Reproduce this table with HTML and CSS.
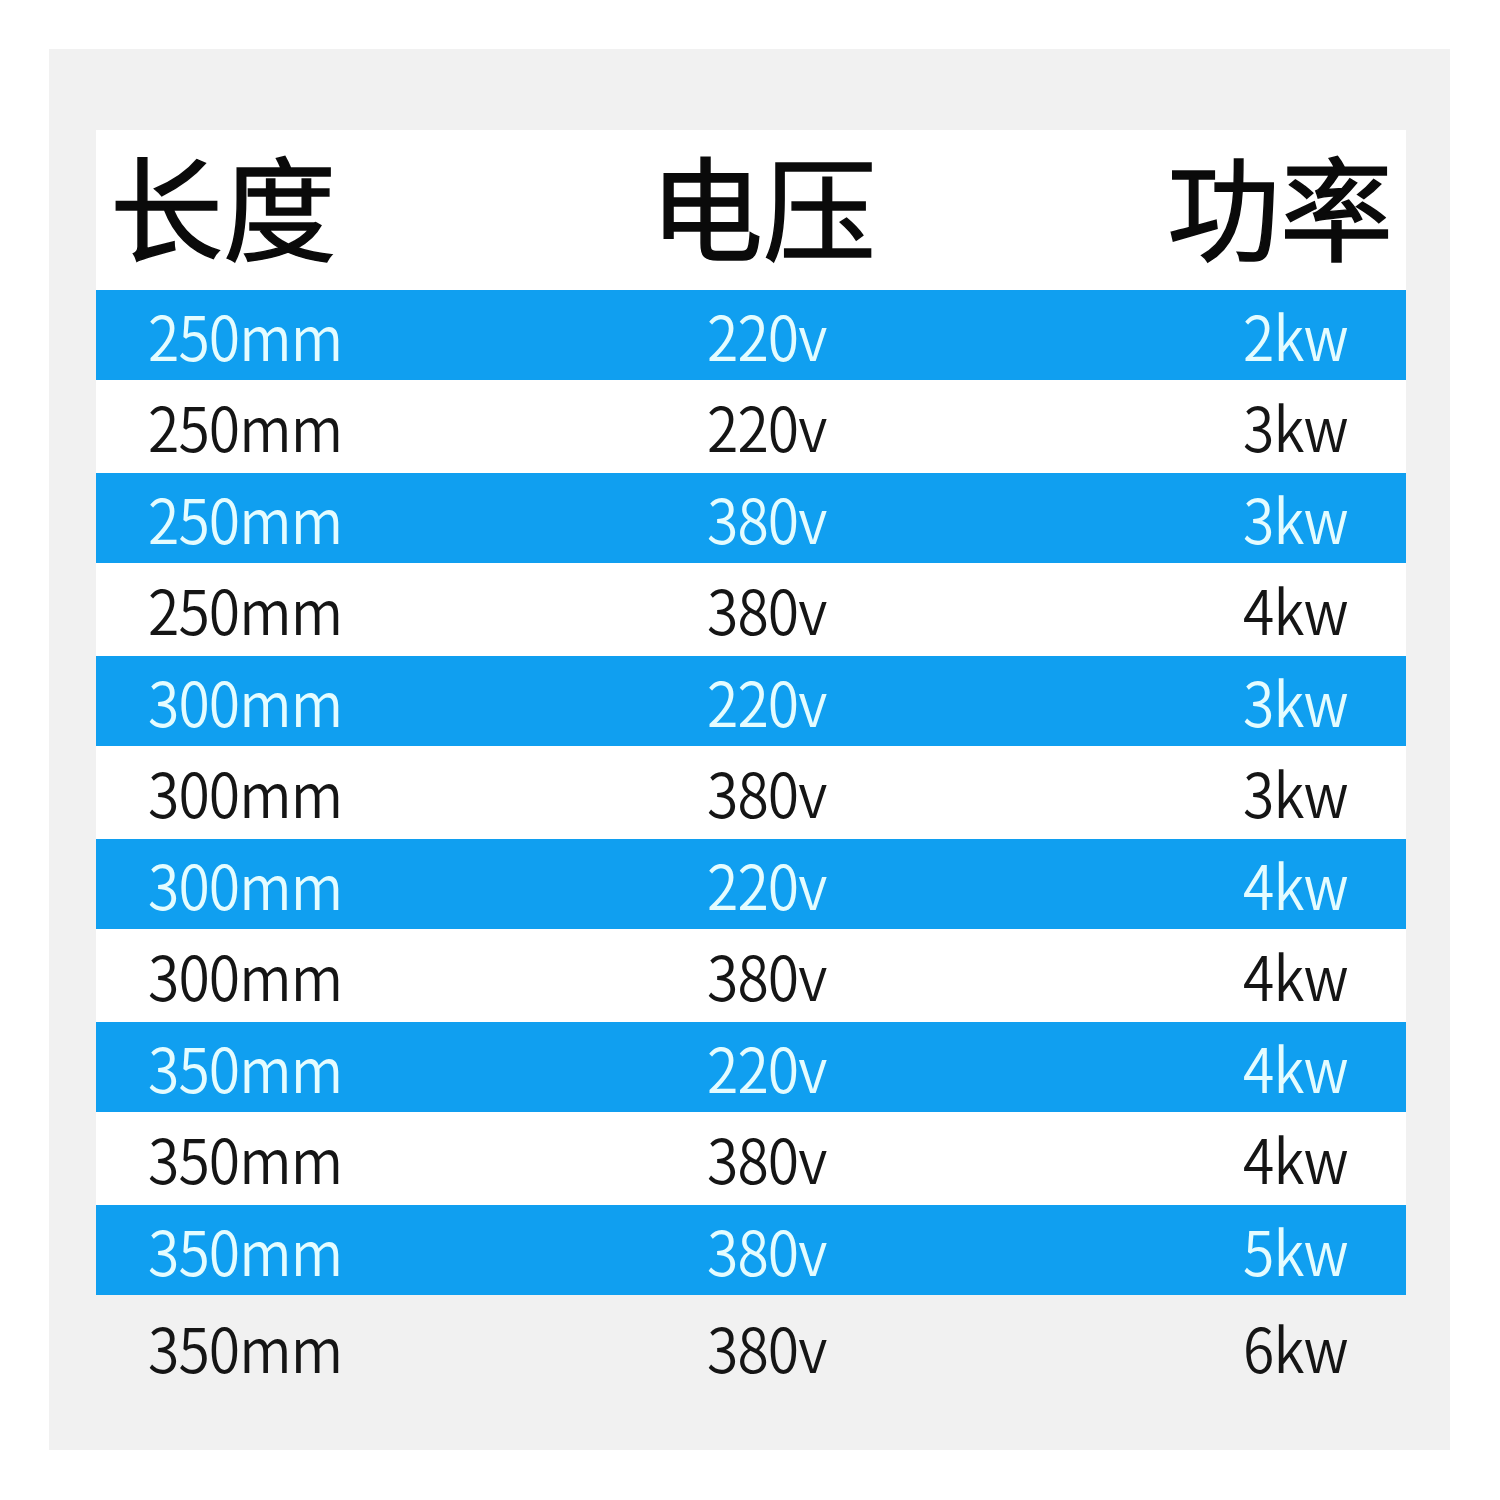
FILE: index.html
```html
<!DOCTYPE html>
<html lang="zh">
<head>
<meta charset="utf-8">
<link rel="stylesheet" href="styles.css">
</head>
<body>
<div class="panel">
  <div class="table">
    <div class="head">
      <span class="h1">长度</span>
      <span class="h2">电压</span>
      <span class="h3">功率</span>
    </div>
    <div class="row blue"><span>250mm</span><span>220v</span><span class="r">2kw</span></div>
    <div class="row white"><span>250mm</span><span>220v</span><span class="r">3kw</span></div>
    <div class="row blue"><span>250mm</span><span>380v</span><span class="r">3kw</span></div>
    <div class="row white"><span>250mm</span><span>380v</span><span class="r">4kw</span></div>
    <div class="row blue"><span>300mm</span><span>220v</span><span class="r">3kw</span></div>
    <div class="row white"><span>300mm</span><span>380v</span><span class="r">3kw</span></div>
    <div class="row blue"><span>300mm</span><span>220v</span><span class="r">4kw</span></div>
    <div class="row white"><span>300mm</span><span>380v</span><span class="r">4kw</span></div>
    <div class="row blue"><span>350mm</span><span>220v</span><span class="r">4kw</span></div>
    <div class="row white"><span>350mm</span><span>380v</span><span class="r">4kw</span></div>
    <div class="row blue"><span>350mm</span><span>380v</span><span class="r">5kw</span></div>
    <div class="row last"><span>350mm</span><span>380v</span><span class="r">6kw</span></div>
  </div>
</div>
</body>
</html>
```
FILE: styles.css
```css
html, body {
  margin: 0;
  padding: 0;
  background: #ffffff;
}
body {
  width: 1500px;
  height: 1500px;
  padding: 49px 0 0 49px;
  box-sizing: border-box;
  font-family: "Noto Sans CJK SC", "Noto Sans", sans-serif;
}
.panel {
  width: 1401px;
  height: 1401px;
  background: #f1f1f1;
  padding: 81px 0 0 47px;
  box-sizing: border-box;
}
.table {
  width: 1310px;
  display: flex;
  flex-direction: column;
}
.head {
  height: 160px;
  background: #ffffff;
  display: grid;
  grid-template-columns: 540px 1fr auto;
  align-items: center;
  padding: 0 13px 0 14px;
  box-sizing: border-box;
  font-size: 113px;
  font-weight: 400;
  line-height: 1;
  color: #0a0a0a;
  -webkit-text-stroke: 1.5px #0a0a0a;
}
.head span {
  padding-bottom: 14px;
}
.row {
  display: grid;
  grid-template-columns: 559px 1fr auto;
  align-items: center;
  padding: 0 58px 0 52px;
  box-sizing: border-box;
  font-size: 62px;
  font-weight: 350;
  letter-spacing: -1px;
  line-height: 1;
}
.row span {
  padding-bottom: 3px;
  transform: scaleX(0.92);
  transform-origin: left center;
}
.row span.r {
  text-align: right;
  transform-origin: right center;
}
.blue {
  height: 90px;
  background: #109ff0;
  color: #e4fcff;
}
.white {
  height: 93px;
  background: #ffffff;
  color: #151515;
}
.last {
  height: 93px;
  background: transparent;
  color: #151515;
}
.last span {
  padding-bottom: 0;
  padding-top: 8px;
}
```
